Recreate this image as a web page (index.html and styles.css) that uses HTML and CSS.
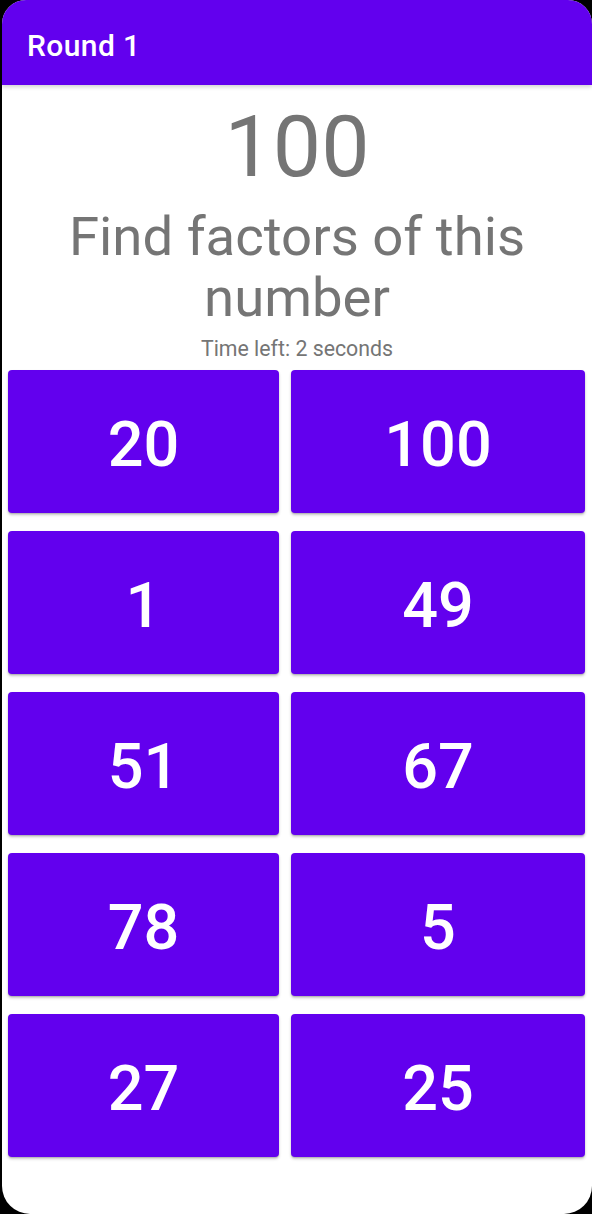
FILE: index.html
```html
<!DOCTYPE html>
<html>
<head>
<meta charset="utf-8">
<link rel="stylesheet" href="styles.css">
</head>
<body>
<div class="screen">
  <header class="appbar"><span class="title">Round 1</span></header>
  <main class="content">
    <div class="target">100</div>
    <div class="prompt">Find factors of this number</div>
    <div class="timer">Time left: 2 seconds</div>
    <div class="grid">
      <button class="opt">20</button>
      <button class="opt">100</button>
      <button class="opt">1</button>
      <button class="opt">49</button>
      <button class="opt">51</button>
      <button class="opt">67</button>
      <button class="opt">78</button>
      <button class="opt">5</button>
      <button class="opt">27</button>
      <button class="opt">25</button>
    </div>
  </main>
</div>
</body>
</html>
```
FILE: styles.css
```css
html, body {
  margin: 0;
  padding: 0;
  background: #000;
}
body {
  width: 592px;
  height: 1214px;
  overflow: hidden;
  font-family: Roboto, "Noto Sans", sans-serif;
}
.screen {
  margin-left: 2px;
  width: 590px;
  height: 1214px;
  background: #fff;
  border-radius: 24px 24px 28px 28px;
  overflow: hidden;
  display: flex;
  flex-direction: column;
}
.appbar {
  height: 85px;
  background: #6200ee;
  display: flex;
  align-items: center;
  padding-left: 25px;
  padding-top: 5px;
  box-sizing: border-box;
  box-shadow: 0 2px 4px rgba(0,0,0,0.18);
  position: relative;
  z-index: 1;
}
.title {
  color: #fff;
  font-size: 30px;
  letter-spacing: 0.4px;
  font-weight: 500;
}
.content {
  display: flex;
  flex-direction: column;
  align-items: center;
  color: #757575;
  text-align: center;
}
.target {
  margin-top: 11px;
  font-size: 86px;
  line-height: normal;
}
.prompt {
  margin-top: 9px;
  font-size: 54.5px;
  line-height: 61px;
  width: 500px;
}
.timer {
  margin-top: 8px;
  font-size: 21.3px;
  line-height: 25px;
}
.grid {
  align-self: flex-start;
  margin-top: 9px;
  margin-left: 6px;
  display: grid;
  grid-template-columns: 271px 294px;
  grid-auto-rows: 143px;
  column-gap: 12px;
  row-gap: 18px;
}
.opt {
  border: none;
  margin: 0;
  background: #6200ee;
  color: #fff;
  font-family: Roboto, "Noto Sans", sans-serif;
  font-size: 63px;
  font-weight: 500;
  border-radius: 4px;
  box-shadow: 0 2px 3px rgba(0,0,0,0.22), 0 1px 1px rgba(0,0,0,0.12);
  display: flex;
  align-items: center;
  justify-content: center;
  padding: 6px 0 0 0;
}
```
